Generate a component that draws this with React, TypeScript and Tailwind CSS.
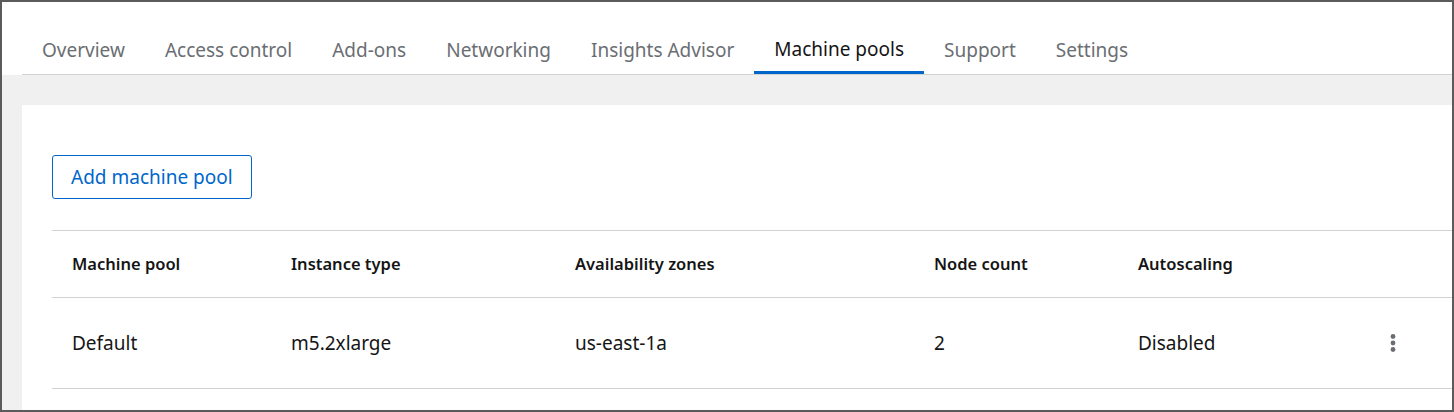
import { useState } from "react"

const tabs = [
  "Overview",
  "Access control",
  "Add-ons",
  "Networking",
  "Insights Advisor",
  "Machine pools",
  "Support",
  "Settings",
]

const columns = ["Machine pool", "Instance type", "Availability zones", "Node count", "Autoscaling"]

const pools = [
  { name: "Default", type: "m5.2xlarge", zones: "us-east-1a", nodes: "2", autoscaling: "Disabled" },
]

function Kebab() {
  return (
    <svg width="8" height="22" viewBox="0 0 8 22" className="text-[#6a6e73]">
      <circle cx="4" cy="4.5" r="2.4" fill="currentColor" />
      <circle cx="4" cy="11" r="2.4" fill="currentColor" />
      <circle cx="4" cy="17.5" r="2.4" fill="currentColor" />
    </svg>
  )
}

export default function App() {
  const [active, setActive] = useState("Machine pools")

  return (
    <div
      className="w-[1454px] h-[412px] border-2 border-[#5b5b5b] bg-[#f0f0f0] overflow-hidden flex flex-col"
      style={{ fontFamily: '"Noto Sans", "Liberation Sans", sans-serif' }}
    >
      <div className="bg-white h-[73px] flex items-end shrink-0">
        <ul className="ml-[20px] flex-1 flex border-b border-[#d2d2d2]">
          {tabs.map((t) => (
            <li key={t}>
              <button
                onClick={() => setActive(t)}
                className={
                  t === active
                    ? "h-[48px] px-[20px] -mb-px border-b-[3px] border-[#0066cc] text-[19px] text-[#151515] flex items-center pt-[2px]"
                    : "h-[48px] px-[20px] text-[19px] text-[#6a6e73] flex items-center"
                }
              >
                {t}
              </button>
            </li>
          ))}
        </ul>
      </div>

      <div className="h-[30px] shrink-0" />

      <div className="flex-1 bg-white ml-[20px] pl-[30px] pt-[50px] overflow-hidden">
        <button className="h-[44px] px-[18px] border border-[#0066cc] rounded-[3px] text-[19px] text-[#0066cc]">
          Add machine pool
        </button>

        <table className="mt-[31px] w-[1420px] table-fixed border-collapse">
          <colgroup>
            <col className="w-[219px]" />
            <col className="w-[284px]" />
            <col className="w-[359px]" />
            <col className="w-[204px]" />
            <col className="w-[250px]" />
            <col />
          </colgroup>
          <thead>
            <tr className="h-[67px] border-t border-b border-[#d2d2d2]">
              {columns.map((c) => (
                <th key={c} className="pl-[20px] text-left text-[16.5px] font-semibold text-[#151515]">
                  {c}
                </th>
              ))}
              <th />
            </tr>
          </thead>
          <tbody>
            {pools.map((p) => (
              <tr key={p.name} className="h-[91px] border-b border-[#d2d2d2] text-[19px] text-[#151515]">
                <td className="pl-[20px]">{p.name}</td>
                <td className="pl-[20px]">{p.type}</td>
                <td className="pl-[20px]">{p.zones}</td>
                <td className="pl-[20px]">{p.nodes}</td>
                <td className="pl-[20px]">{p.autoscaling}</td>
                <td className="pl-[20px]">
                  <div className="flex pl-[1px]">
                    <Kebab />
                  </div>
                </td>
              </tr>
            ))}
          </tbody>
        </table>
      </div>
    </div>
  )
}
